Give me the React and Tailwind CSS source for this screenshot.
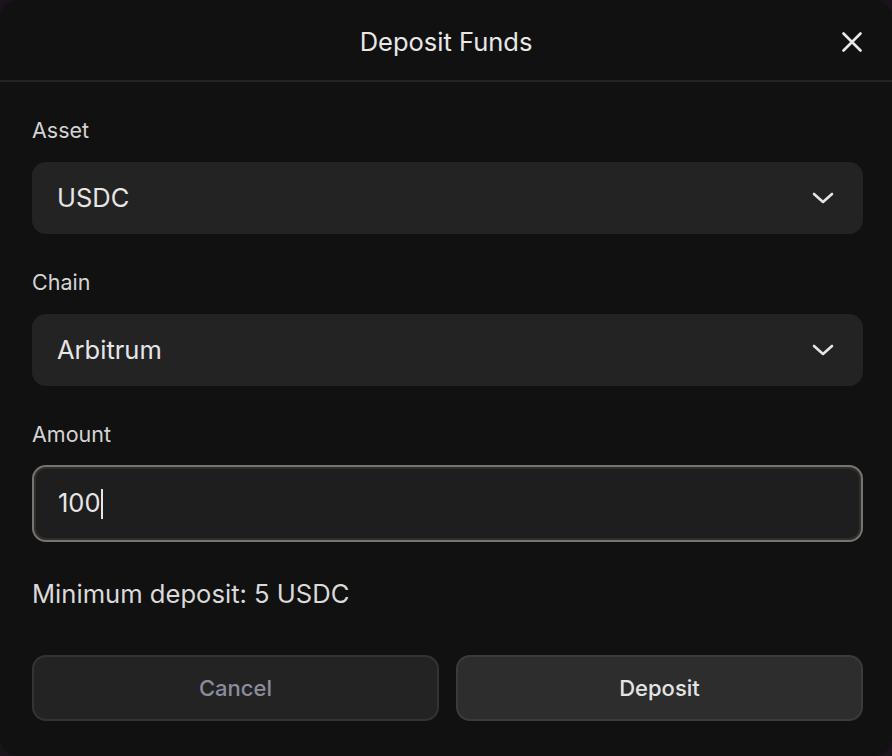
import React from "react";

function Chevron() {
  return (
    <svg width="24" height="24" viewBox="0 0 24 24" fill="none">
      <path
        d="M3 8l9 8 9-8"
        stroke="#e5e5e5"
        strokeWidth="2.6"
        strokeLinecap="round"
        strokeLinejoin="round"
      />
    </svg>
  );
}

function SelectField({ label, value }) {
  return (
    <div className="flex flex-col">
      <label className="text-[21.5px] leading-[28px] text-[#d4d4d4]">{label}</label>
      <div className="mt-[18px] h-[72px] rounded-[14px] bg-[#232323] flex items-center justify-between pl-[25px] pr-[28px]">
        <span className="text-[25.5px] text-[#e6e6e6]">{value}</span>
        <Chevron />
      </div>
    </div>
  );
}

export default function App() {
  return (
    <div
      className="w-[892px] h-[756px] bg-[#1a131c]"
      style={{ fontFamily: "Inter, 'Noto Sans', sans-serif" }}
    >
      <div className="w-full h-full rounded-[18px] bg-[#111111] flex flex-col">
        {/* header */}
        <div className="relative h-[82px] border-b-2 border-[#242424] flex items-center justify-center pt-[4px]">
          <h2 className="text-[25.5px] text-[#e8e8e8]">Deposit Funds</h2>
          <button className="absolute right-[30px] top-[32px]">
            <svg width="20" height="20" viewBox="0 0 20 20" fill="none">
              <path
                d="M1.5 1.5l17 17M18.5 1.5l-17 17"
                stroke="#e8e8e8"
                strokeWidth="2.6"
                strokeLinecap="round"
              />
            </svg>
          </button>
        </div>

        <div className="pl-[32px] pr-[29px] pt-[34px] flex flex-col">
          <SelectField label="Asset" value="USDC" />
          <div className="mt-[34px]">
            <SelectField label="Chain" value="Arbitrum" />
          </div>

          <div className="mt-[34px] flex flex-col">
            <label className="text-[21.5px] leading-[28px] text-[#d4d4d4]">Amount</label>
            <div className="mt-[17px] h-[77px] rounded-[14px] bg-[#1e1e1e] border-2 border-[#7a746e] ring-2 ring-inset ring-[#2e2e2e] flex items-center pl-[24px]">
              <span className="text-[25.5px] text-[#e6e6e6]">100</span>
              <span className="w-[2px] h-[30px] bg-[#e6e6e6]" />
            </div>
          </div>

          <p className="mt-[36px] text-[25.6px] leading-[32px] text-[#dadada]">
            Minimum deposit: 5 USDC
          </p>

          <div className="mt-[45px] grid grid-cols-2 gap-[17px]">
            <button className="h-[66px] rounded-[14px] bg-[#232323] border-2 border-[#333333] text-[22px] font-medium text-[#8c8c9c]">
              Cancel
            </button>
            <button className="h-[66px] rounded-[14px] bg-[#2d2d2d] border-2 border-[#3b3b3b] text-[22px] font-medium text-[#e4e4e4]">
              Deposit
            </button>
          </div>
        </div>
      </div>
    </div>
  );
}
